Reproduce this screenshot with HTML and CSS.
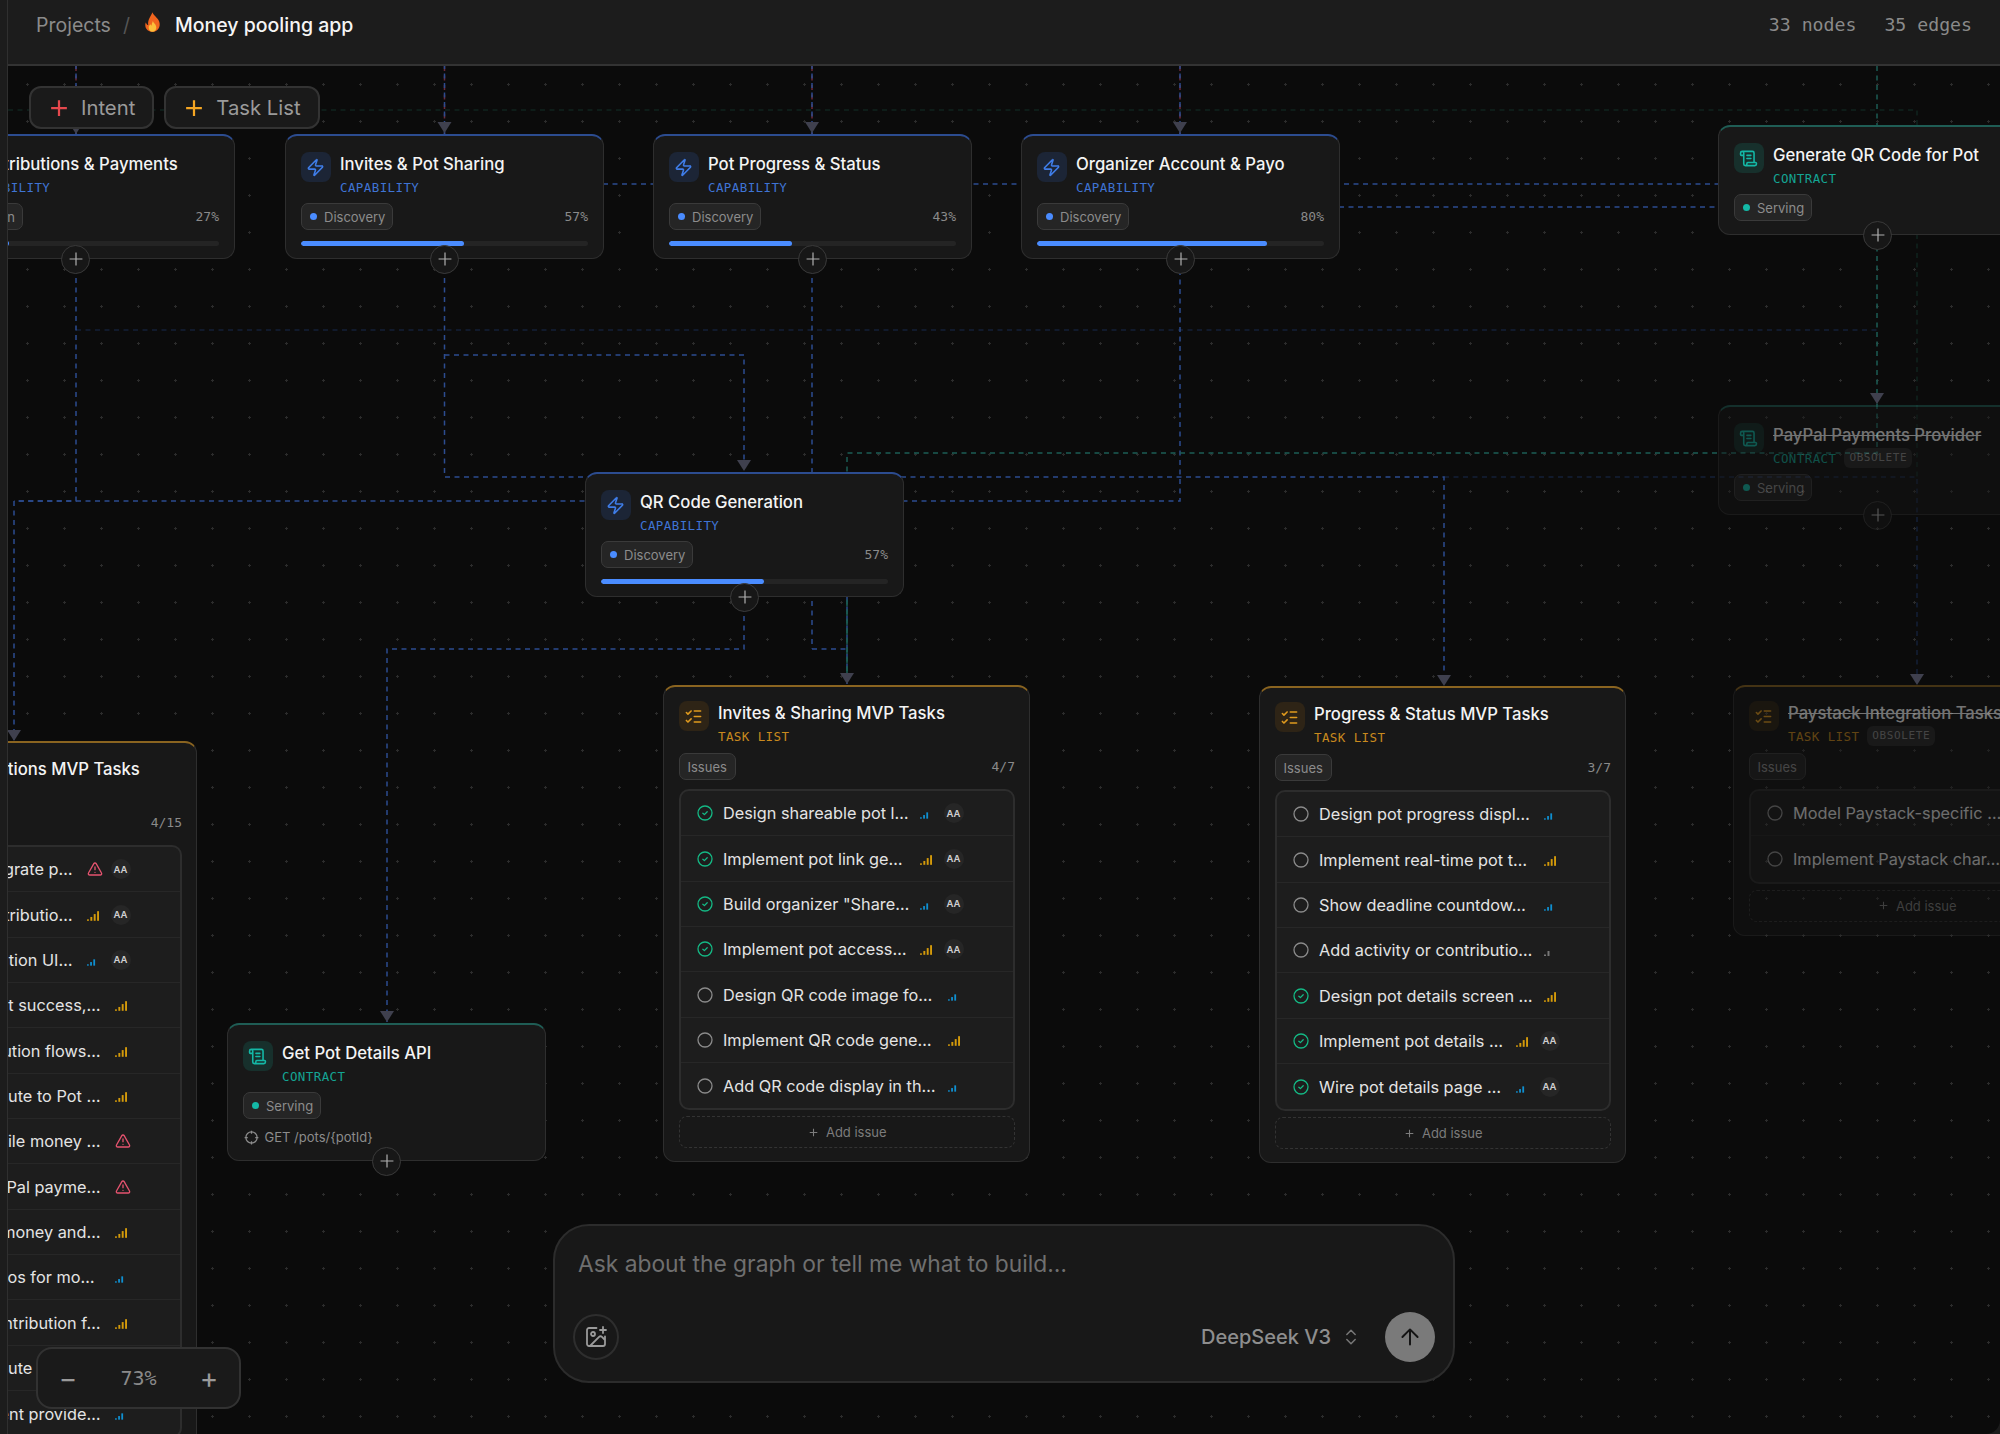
FILE: index.html
```html
<!DOCTYPE html>
<html lang="en">
<head>
<meta charset="utf-8">
<title>Money pooling app</title>
<link rel="stylesheet" href="styles.css">
</head>
<body>
<svg class="sprite" aria-hidden="true">
  <symbol id="i-zap" viewBox="0 0 24 24"><path d="M4 14a1 1 0 0 1-.78-1.63l9.9-10.2a.5.5 0 0 1 .86.46l-1.92 6.02A1 1 0 0 0 13 10h7a1 1 0 0 1 .78 1.63l-9.9 10.2a.5.5 0 0 1-.86-.46l1.92-6.02A1 1 0 0 0 11 14z"/></symbol>
  <symbol id="i-scroll" viewBox="0 0 24 24"><path d="M15 12h-5M15 8h-5M19 17V5a2 2 0 0 0-2-2H4M8 21h12a2 2 0 0 0 2-2v-1a1 1 0 0 0-1-1H11a1 1 0 0 0-1 1v1a2 2 0 1 1-4 0V5a2 2 0 1 0-4 0v2a1 1 0 0 0 1 1h3"/></symbol>
  <symbol id="i-list" viewBox="0 0 24 24"><path d="M13 5h8M13 12h8M13 19h8M3 17l2 2 4-4M3 7l2 2 4-4"/></symbol>
  <symbol id="i-plus" viewBox="0 0 24 24"><path d="M5 12h14M12 5v14"/></symbol>
  <symbol id="i-plus-tight" viewBox="4 4 16 16"><path d="M5 12h14M12 5v14"/></symbol>
  <symbol id="i-open" viewBox="0 0 16 16"><circle cx="8" cy="8" r="7"/></symbol>
  <symbol id="i-done" viewBox="0 0 16 16"><circle cx="8" cy="8" r="7"/><path d="M5.8 8.3l1.6 1.3 2.8-2.8"/></symbol>
  <symbol id="i-alert" viewBox="0 0 24 24"><path d="M21.73 18l-8-14a2 2 0 0 0-3.48 0l-8 14A2 2 0 0 0 4 21h16a2 2 0 0 0 1.73-3M12 9v4M12 17h.01"/></symbol>
  <symbol id="i-locate" viewBox="0 0 24 24"><circle cx="12" cy="12" r="9"/><path d="M1 12h5M18 12h5M12 1v5M12 18v5"/></symbol>
  <symbol id="i-sig3" viewBox="0 0 10 7"><rect x="0" y="5.5" width="2" height="1.5"/><rect x="3.5" y="3" width="2" height="4"/><rect x="7" y="0" width="2" height="7"/></symbol>
  <symbol id="i-sig4" viewBox="0 0 13 10"><rect x="0" y="8.5" width="2" height="1.5"/><rect x="3.5" y="6" width="2" height="4"/><rect x="7" y="3" width="2" height="7"/><rect x="10.5" y="0" width="2" height="10"/></symbol>
  <symbol id="i-sig2" viewBox="0 0 6 5"><rect x="0" y="3.5" width="2" height="1.5"/><rect x="3.5" y="0" width="2" height="5"/></symbol>
</svg>

<div class="app">
  <aside class="rail"></aside>
  <main class="main">
    <header class="topbar">
      <nav class="crumbs">
        <span class="crumb">Projects</span>
        <span class="crumb-sep">/</span>
        <svg class="flame" viewBox="0 0 20 24"><path class="flame-o" d="M10 0c1 4 6 6 8 11 2 6-2 12-8 12S0 18 2 12c1 2 2 3 3 3C4 9 8 5 10 0z"/><path class="flame-y" d="M10.500 10c.5 3 4 4 4 8 0 3-2 5-4.500 5s-4.500-2-4.500-5c0-2 1-3 2-4 .5 1 1 1.500 1.500 1.500C9 13 10 12 10.500 10z"/></svg>
        <span class="crumb-current">Money pooling app</span>
      </nav>
      <div class="stats"><span>33 nodes</span><span>35 edges</span></div>
    </header>

    <section class="canvas">
      <div class="graph">
        <svg class="edges" width="2100" height="1500" viewBox="0 0 2100 1500" fill="none">
          <g class="e-faint-teal"><path d="M8 110H1917V477"/></g>
          <g class="e-faint-blue"><path d="M76 330H1877M1444 477H1917V684"/></g>
          <g class="e-red"><path d="M76 66V134M444.500 66V134M812 66V134M1180 66V134"/></g>
          <g class="e-blue e-top"><path d="M76 66V134M444.500 66V134M812 66V134M1180 66V134"/></g>
          <g class="e-blue">
            <path d="M76 259V501H14V740"/>
            <path d="M76 501H1180V259"/>
            <path d="M444.500 259V477H1444V684"/>
            <path d="M444.500 355H744V471"/>
            <path d="M812 259V649"/>
            <path d="M744 597V649H387V1022"/>
            <path d="M812 649H847"/>
            <path d="M603 184H1718"/>
            <path d="M1339 207H1718"/>
            <path d="M847 597V684"/>
          </g>
          <g class="e-blue e-shift"><path d="M76 501H14"/></g>
          <g class="e-teal">
            <path d="M1877 66V404"/>
            <path d="M1877 404V453H847V684"/>
          </g>
          <g class="e-teal e-shift"><path d="M847 597V684"/></g>
          <g class="arrows">
            <path d="M69 123h14l-7 11z"/><path d="M437.500 122h14l-7 11z"/><path d="M805 122h14l-7 11z"/><path d="M1173 122h14l-7 11z"/>
            <path d="M737 460h14l-7 11z"/><path d="M840 673h14l-7 11z"/><path d="M1437 675h14l-7 11z"/><path d="M1910 674h14l-7 11z"/>
            <path d="M1870 393h14l-7 11z"/><path d="M380 1011h14l-7 11z"/><path d="M7 730h14l-7 11z"/>
          </g>
        </svg>

        <!-- capability nodes -->
        <article class="node cap n-contrib">
          <div class="node-head">
            <span class="node-icon"><svg class="ico"><use href="#i-zap"/></svg></span>
            <div class="node-names"><h3 class="node-title">Contributions &amp; Payments</h3><p class="node-kind">CAPABILITY</p></div>
          </div>
          <div class="node-meta"><span class="pill"><i class="dot"></i>Validation</span><span class="pct">27%</span></div>
          <div class="bar"><div class="bar-fill" style="width:27%"></div></div>
          <button class="add"><svg class="add-ico"><use href="#i-plus"/></svg></button>
        </article>

        <article class="node cap n-invites">
          <div class="node-head">
            <span class="node-icon"><svg class="ico"><use href="#i-zap"/></svg></span>
            <div class="node-names"><h3 class="node-title">Invites &amp; Pot Sharing</h3><p class="node-kind">CAPABILITY</p></div>
          </div>
          <div class="node-meta"><span class="pill"><i class="dot"></i>Discovery</span><span class="pct">57%</span></div>
          <div class="bar"><div class="bar-fill" style="width:57%"></div></div>
          <button class="add"><svg class="add-ico"><use href="#i-plus"/></svg></button>
        </article>

        <article class="node cap n-progress">
          <div class="node-head">
            <span class="node-icon"><svg class="ico"><use href="#i-zap"/></svg></span>
            <div class="node-names"><h3 class="node-title">Pot Progress &amp; Status</h3><p class="node-kind">CAPABILITY</p></div>
          </div>
          <div class="node-meta"><span class="pill"><i class="dot"></i>Discovery</span><span class="pct">43%</span></div>
          <div class="bar"><div class="bar-fill" style="width:43%"></div></div>
          <button class="add"><svg class="add-ico"><use href="#i-plus"/></svg></button>
        </article>

        <article class="node cap n-organizer">
          <div class="node-head">
            <span class="node-icon"><svg class="ico"><use href="#i-zap"/></svg></span>
            <div class="node-names"><h3 class="node-title">Organizer Account &amp; Payo</h3><p class="node-kind">CAPABILITY</p></div>
          </div>
          <div class="node-meta"><span class="pill"><i class="dot"></i>Discovery</span><span class="pct">80%</span></div>
          <div class="bar"><div class="bar-fill" style="width:80%"></div></div>
          <button class="add"><svg class="add-ico"><use href="#i-plus"/></svg></button>
        </article>

        <article class="node cap n-qr">
          <div class="node-head">
            <span class="node-icon"><svg class="ico"><use href="#i-zap"/></svg></span>
            <div class="node-names"><h3 class="node-title">QR Code Generation</h3><p class="node-kind">CAPABILITY</p></div>
          </div>
          <div class="node-meta"><span class="pill"><i class="dot"></i>Discovery</span><span class="pct">57%</span></div>
          <div class="bar"><div class="bar-fill" style="width:57%"></div></div>
          <button class="add"><svg class="add-ico"><use href="#i-plus"/></svg></button>
        </article>

        <!-- contract nodes -->
        <article class="node con n-genqr">
          <div class="node-head">
            <span class="node-icon"><svg class="ico"><use href="#i-scroll"/></svg></span>
            <div class="node-names"><h3 class="node-title">Generate QR Code for Pot</h3><p class="node-kind">CONTRACT</p></div>
          </div>
          <div class="node-meta"><span class="pill"><i class="dot"></i>Serving</span></div>
          <button class="add"><svg class="add-ico"><use href="#i-plus"/></svg></button>
        </article>

        <article class="node con obsolete n-paypal">
          <div class="node-head">
            <span class="node-icon"><svg class="ico"><use href="#i-scroll"/></svg></span>
            <div class="node-names"><h3 class="node-title">PayPal Payments Provider</h3><p class="node-kind">CONTRACT<span class="tag">OBSOLETE</span></p></div>
          </div>
          <div class="node-meta"><span class="pill"><i class="dot"></i>Serving</span></div>
          <button class="add"><svg class="add-ico"><use href="#i-plus"/></svg></button>
        </article>

        <article class="node con n-getpot">
          <div class="node-head">
            <span class="node-icon"><svg class="ico"><use href="#i-scroll"/></svg></span>
            <div class="node-names"><h3 class="node-title">Get Pot Details API</h3><p class="node-kind">CONTRACT</p></div>
          </div>
          <div class="node-meta"><span class="pill"><i class="dot"></i>Serving</span></div>
          <div class="endpoint"><svg class="endpoint-ico"><use href="#i-locate"/></svg>GET /pots/{potId}</div>
          <button class="add"><svg class="add-ico"><use href="#i-plus"/></svg></button>
        </article>

        <!-- task list nodes -->
        <article class="node task n-tcontrib">
          <div class="node-head">
            <span class="node-icon"><svg class="ico"><use href="#i-list"/></svg></span>
            <div class="node-names"><h3 class="node-title">Group Contributions MVP Tasks</h3><p class="node-kind">TASK LIST</p></div>
          </div>
          <div class="node-meta"><span class="pill">Issues</span><span class="pct">4/15</span></div>
          <ul class="issues">
            <li class="issue"><svg class="st done"><use href="#i-done"/></svg><span class="issue-text tail">Integrate p…</span><span class="sig"><svg class="alert"><use href="#i-alert"/></svg></span><span class="ava">AA</span></li>
            <li class="issue"><svg class="st done"><use href="#i-done"/></svg><span class="issue-text tail">Attributio…</span><span class="sig"><svg class="s4"><use href="#i-sig4"/></svg></span><span class="ava">AA</span></li>
            <li class="issue"><svg class="st done"><use href="#i-done"/></svg><span class="issue-text tail">Contribution UI…</span><span class="sig"><svg class="s3"><use href="#i-sig3"/></svg></span><span class="ava">AA</span></li>
            <li class="issue"><svg class="st done"><use href="#i-done"/></svg><span class="issue-text tail">Handle payment success,…</span><span class="sig"><svg class="s4"><use href="#i-sig4"/></svg></span></li>
            <li class="issue"><svg class="st"><use href="#i-open"/></svg><span class="issue-text tail">Test contribution flows…</span><span class="sig"><svg class="s4"><use href="#i-sig4"/></svg></span></li>
            <li class="issue"><svg class="st"><use href="#i-open"/></svg><span class="issue-text tail">Wire contribute to Pot …</span><span class="sig"><svg class="s4"><use href="#i-sig4"/></svg></span></li>
            <li class="issue"><svg class="st"><use href="#i-open"/></svg><span class="issue-text tail">Integrate mobile money …</span><span class="sig"><svg class="alert"><use href="#i-alert"/></svg></span></li>
            <li class="issue"><svg class="st"><use href="#i-open"/></svg><span class="issue-text tail">Integrate PayPal payme…</span><span class="sig"><svg class="alert"><use href="#i-alert"/></svg></span></li>
            <li class="issue"><svg class="st"><use href="#i-open"/></svg><span class="issue-text tail">Add mobile money and…</span><span class="sig"><svg class="s4"><use href="#i-sig4"/></svg></span></li>
            <li class="issue"><svg class="st"><use href="#i-open"/></svg><span class="issue-text tail tail-far">Test scenarios for mo…</span><span class="sig"><svg class="s3"><use href="#i-sig3"/></svg></span></li>
            <li class="issue"><svg class="st"><use href="#i-open"/></svg><span class="issue-text tail">Add contribution f…</span><span class="sig"><svg class="s4"><use href="#i-sig4"/></svg></span></li>
            <li class="issue"><svg class="st"><use href="#i-open"/></svg><span class="issue-text tail">Wire contribute to Pot …</span><span class="sig"><svg class="s4"><use href="#i-sig4"/></svg></span></li>
            <li class="issue"><svg class="st"><use href="#i-open"/></svg><span class="issue-text tail">Add payment provide…</span><span class="sig"><svg class="s3"><use href="#i-sig3"/></svg></span></li>
          </ul>
        </article>

        <article class="node task n-tinvites">
          <div class="node-head">
            <span class="node-icon"><svg class="ico"><use href="#i-list"/></svg></span>
            <div class="node-names"><h3 class="node-title">Invites &amp; Sharing MVP Tasks</h3><p class="node-kind">TASK LIST</p></div>
          </div>
          <div class="node-meta"><span class="pill">Issues</span><span class="pct">4/7</span></div>
          <ul class="issues">
            <li class="issue"><svg class="st done"><use href="#i-done"/></svg><span class="issue-text">Design shareable pot l…</span><span class="sig"><svg class="s3"><use href="#i-sig3"/></svg></span><span class="ava">AA</span></li>
            <li class="issue"><svg class="st done"><use href="#i-done"/></svg><span class="issue-text">Implement pot link ge…</span><span class="sig"><svg class="s4"><use href="#i-sig4"/></svg></span><span class="ava">AA</span></li>
            <li class="issue"><svg class="st done"><use href="#i-done"/></svg><span class="issue-text">Build organizer "Share…</span><span class="sig"><svg class="s3"><use href="#i-sig3"/></svg></span><span class="ava">AA</span></li>
            <li class="issue"><svg class="st done"><use href="#i-done"/></svg><span class="issue-text">Implement pot access…</span><span class="sig"><svg class="s4"><use href="#i-sig4"/></svg></span><span class="ava">AA</span></li>
            <li class="issue"><svg class="st"><use href="#i-open"/></svg><span class="issue-text">Design QR code image fo…</span><span class="sig"><svg class="s3"><use href="#i-sig3"/></svg></span></li>
            <li class="issue"><svg class="st"><use href="#i-open"/></svg><span class="issue-text">Implement QR code gene…</span><span class="sig"><svg class="s4"><use href="#i-sig4"/></svg></span></li>
            <li class="issue"><svg class="st"><use href="#i-open"/></svg><span class="issue-text">Add QR code display in th…</span><span class="sig"><svg class="s3"><use href="#i-sig3"/></svg></span></li>
          </ul>
          <div class="add-issue"><svg class="add-issue-ico"><use href="#i-plus"/></svg>Add issue</div>
        </article>

        <article class="node task n-tprogress">
          <div class="node-head">
            <span class="node-icon"><svg class="ico"><use href="#i-list"/></svg></span>
            <div class="node-names"><h3 class="node-title">Progress &amp; Status MVP Tasks</h3><p class="node-kind">TASK LIST</p></div>
          </div>
          <div class="node-meta"><span class="pill">Issues</span><span class="pct">3/7</span></div>
          <ul class="issues">
            <li class="issue"><svg class="st"><use href="#i-open"/></svg><span class="issue-text">Design pot progress displ…</span><span class="sig"><svg class="s3"><use href="#i-sig3"/></svg></span></li>
            <li class="issue"><svg class="st"><use href="#i-open"/></svg><span class="issue-text">Implement real-time pot t…</span><span class="sig"><svg class="s4"><use href="#i-sig4"/></svg></span></li>
            <li class="issue"><svg class="st"><use href="#i-open"/></svg><span class="issue-text">Show deadline countdow…</span><span class="sig"><svg class="s3"><use href="#i-sig3"/></svg></span></li>
            <li class="issue"><svg class="st"><use href="#i-open"/></svg><span class="issue-text">Add activity or contributio…</span><span class="sig"><svg class="s2"><use href="#i-sig2"/></svg></span></li>
            <li class="issue"><svg class="st done"><use href="#i-done"/></svg><span class="issue-text">Design pot details screen …</span><span class="sig"><svg class="s4"><use href="#i-sig4"/></svg></span></li>
            <li class="issue"><svg class="st done"><use href="#i-done"/></svg><span class="issue-text">Implement pot details …</span><span class="sig"><svg class="s4"><use href="#i-sig4"/></svg></span><span class="ava">AA</span></li>
            <li class="issue"><svg class="st done"><use href="#i-done"/></svg><span class="issue-text">Wire pot details page …</span><span class="sig"><svg class="s3"><use href="#i-sig3"/></svg></span><span class="ava">AA</span></li>
          </ul>
          <div class="add-issue"><svg class="add-issue-ico"><use href="#i-plus"/></svg>Add issue</div>
        </article>

        <article class="node task obsolete n-tpaystack">
          <div class="node-head">
            <span class="node-icon"><svg class="ico"><use href="#i-list"/></svg></span>
            <div class="node-names"><h3 class="node-title">Paystack Integration Tasks</h3><p class="node-kind">TASK LIST<span class="tag">OBSOLETE</span></p></div>
          </div>
          <div class="node-meta"><span class="pill">Issues</span><span class="pct">0/2</span></div>
          <ul class="issues">
            <li class="issue"><svg class="st"><use href="#i-open"/></svg><span class="issue-text">Model Paystack-specific …</span><span class="sig"><svg class="s4"><use href="#i-sig4"/></svg></span></li>
            <li class="issue"><svg class="st"><use href="#i-open"/></svg><span class="issue-text">Implement Paystack char…</span><span class="sig"><svg class="s4"><use href="#i-sig4"/></svg></span></li>
          </ul>
          <div class="add-issue"><svg class="add-issue-ico"><use href="#i-plus"/></svg>Add issue</div>
        </article>
      </div>

      <div class="toolbar">
        <button class="tool"><svg class="tool-ico red"><use href="#i-plus-tight"/></svg>Intent</button>
        <button class="tool"><svg class="tool-ico amber"><use href="#i-plus-tight"/></svg>Task List</button>
      </div>

      <div class="zoombox">
        <span class="zoom-btn">−</span>
        <span class="zoom-val">73%</span>
        <span class="zoom-btn">+</span>
      </div>

      <form class="chat">
        <div class="chat-input">Ask about the graph or tell me what to build…</div>
        <div class="chat-foot">
          <button class="attach" type="button"><svg class="attach-ico" viewBox="0 0 24 24"><path d="M16 5h6M19 2v6M21 11.500V19a2 2 0 0 1-2 2H5a2 2 0 0 1-2-2V5a2 2 0 0 1 2-2h7.500M21 15l-3.086-3.086a2 2 0 0 0-2.828 0L6 21"/><circle cx="9" cy="9" r="2"/></svg></button>
          <span class="model">DeepSeek V3<svg class="model-ico" viewBox="0 0 24 24"><path d="M7 15l5 5 5-5M7 9l5-5 5 5"/></svg></span>
          <button class="send" type="button"><svg class="send-ico" viewBox="0 0 24 24"><path d="M5 12l7-7 7 7M12 19V5"/></svg></button>
        </div>
      </form>
    </section>
  </main>
</div>
</body>
</html>
```

FILE: styles.css
```css
* { box-sizing: border-box; margin: 0; padding: 0; }
html, body { width: 2000px; height: 1434px; overflow: hidden; background: #1b1b1b; }
body { font-family: Inter, "Noto Sans", sans-serif; color: #f2f2f2; }
button { font: inherit; color: inherit; }
ul { list-style: none; }
.sprite { position: absolute; width: 0; height: 0; }

.app { display: flex; width: 2000px; height: 1434px; }
.rail { width: 8px; flex: none; background: #1c1c1c; border-right: 1px solid #2f2f2f; }
.main { flex: 1; min-width: 0; display: flex; flex-direction: column; }

.topbar { height: 66px; flex: none; display: flex; align-items: flex-start; justify-content: space-between; padding: 12px 28px 0 28px; background: #1c1c1c; border-bottom: 2px solid #333; position: relative; z-index: 5; }
.crumbs { display: flex; align-items: center; height: 25px; font-size: 19.500px; }
.crumb { color: #8b8b8b; }
.crumb-sep { color: #555; margin-left: 12px; margin-right: 14px; }
.flame { width: 17px; height: 21px; margin-top: -4px; margin-right: 14px; }
.flame-o { fill: #f0641e; }
.flame-y { fill: #fbbf3a; }
.crumb-current { font-weight: 500; color: #f5f5f5; }
.stats { display: flex; gap: 28px; font-family: "DejaVu Sans Mono", monospace; font-size: 18.200px; color: #8a8a8a; height: 25px; line-height: 25px; }

.canvas { position: relative; flex: 1; overflow: hidden; background-color: #0b0b0b; background-image: radial-gradient(circle at center, #2c2c2c 1px, transparent 1.4px); background-size: 37px 37px; background-position: 1px 0; border-bottom-right-radius: 14px; }
.graph { position: absolute; left: -8px; top: -66px; width: 2100px; height: 1500px; }
.edges { position: absolute; left: 0; top: 0; }
.edges path { stroke-width: 1.5; stroke-dasharray: 5 4.5; }
.e-blue path { stroke: #2c4c90; }
.e-teal path { stroke: #1d5d55; }
.e-red path { stroke: #6d2a3a; }
.e-faint-blue path { stroke: #152038; }
.e-faint-teal path { stroke: #10241f; }
.e-shift path { stroke-dashoffset: 5; }
.e-top path { stroke-dashoffset: 2; }
.edges .arrows path { fill: #3f404e; stroke: none; }

.node { position: absolute; width: 319px; background: #181818; border: 1.5px solid #2e2e2e; border-radius: 12px; padding: 16px 15px 13px 14.500px; }
.cap { border-top: 2px solid #2c4c90; }
.con { border-top: 2px solid #1f5d55; }
.task { border-top: 2px solid #8a6420; width: 367px; padding-top: 14px; padding-right: 14px; }
.obsolete { opacity: .45; background: #141414; }
.n-contrib { left: -84px; top: 134px; }
.n-invites { left: 285px; top: 134px; }
.n-progress { left: 653px; top: 134px; }
.n-organizer { left: 1021px; top: 134px; }
.n-qr { left: 585px; top: 472px; }
.n-genqr { left: 1718px; top: 125px; }
.n-paypal { left: 1718px; top: 405px; }
.n-getpot { left: 227px; top: 1023px; }
.n-tcontrib { left: -170px; top: 741px; }
.n-tinvites { left: 663px; top: 685px; }
.n-tprogress { left: 1259px; top: 686px; }
.n-tpaystack { left: 1733px; top: 685px; }

.node-head { display: flex; gap: 9.500px; align-items: flex-start; }
.node-icon { width: 30px; height: 30px; flex: none; border-radius: 8px; display: flex; align-items: center; justify-content: center; }
.ico { width: 19px; height: 19px; fill: none; stroke: currentColor; stroke-width: 2; stroke-linecap: round; stroke-linejoin: round; }
.cap .node-icon { background: #1c2536; color: #3f7de8; }
.con .node-icon { background: #17302c; color: #14b8a6; }
.task .node-icon { background: #2e2416; color: #e09a1e; }
.node-names { padding-top: 2px; min-width: 0; }
.node-title { font-size: 16.700px; font-weight: 500; line-height: 20px; white-space: nowrap; color: #f4f4f4; }
.obsolete .node-title { text-decoration: line-through; }
.node-kind { display: flex; align-items: center; margin-top: 5px; height: 16px; font-family: "DejaVu Sans Mono", monospace; font-size: 12.500px; letter-spacing: .4px; white-space: nowrap; }
.cap .node-kind { color: #3f74d4; }
.con .node-kind { color: #14a594; }
.task .node-kind { color: #c98a1e; }
.tag { margin-left: 8px; padding: 0 5px; height: 20px; line-height: 20px; border-radius: 6px; background: #2a2a2a; color: #8a8a8a; font-size: 11px; letter-spacing: .6px; }

.node-meta { display: flex; align-items: center; justify-content: space-between; margin-top: 8px; }
.task .node-meta { margin-top: 9px; }
.pill { display: inline-flex; align-items: center; gap: 6px; height: 27px; padding: 0 7px 0 8px; border: 1.5px solid #3a3a3a; border-radius: 7px; background: #252525; font-size: 13px; color: #8c8c8c; }
.task .pill { padding: 0 8px; }
.dot { width: 7.500px; height: 7.500px; border-radius: 50%; margin-right: 1px; }
.cap .dot { background: #4a8cff; }
.con .dot { background: #14b8a6; }
.pct { font-family: "DejaVu Sans Mono", monospace; font-size: 13px; color: #8a8a8a; }

.bar { height: 5px; margin-top: 11px; border-radius: 3px; background: #242424; overflow: hidden; }
.bar-fill { height: 5px; border-radius: 3px; background: #4a8cff; }
.cap { padding-bottom: 12px; }

.add { position: absolute; left: 50%; bottom: -15.500px; width: 29px; height: 29px; margin-left: -14.500px; border-radius: 50%; background: #171717; border: 1.5px solid #3a3a3a; display: flex; align-items: center; justify-content: center; z-index: 2; }
.add-ico { width: 22px; height: 22px; fill: none; stroke: #b0b0b0; stroke-width: 1.300; }

.endpoint { display: flex; align-items: center; gap: 6px; margin-top: 8px; height: 20px; font-size: 13px; color: #8c8c8c; }
.endpoint-ico { width: 15px; height: 15px; margin-left: 1px; fill: none; stroke: #8c8c8c; stroke-width: 2; }

.issues { margin-top: 9px; border: 2px solid #2d2d2d; border-radius: 10px; background: #1d1d1d; overflow: hidden; }
.issue { display: flex; align-items: center; height: 45.350px; padding: 0 49.500px 0 16px; border-bottom: 1px solid #272727; }
.issue:last-child { border-bottom: 0; }
.st { width: 16px; height: 16px; flex: none; margin-right: 10.500px; fill: none; stroke: #8a8a8a; stroke-width: 1.300; }
.st.done { stroke: #14b884; stroke-linecap: round; stroke-linejoin: round; }
.issue-text { flex: 1; min-width: 0; white-space: nowrap; font-size: 16.300px; color: #e4e4e4; }
.tail { display: flex; justify-content: flex-end; padding-right: 14px; }
.tail-far { padding-right: 20px; }
.sig { width: 16px; height: 12px; flex: none; display: flex; align-items: flex-end; }
.s3 { width: 9px; height: 7px; fill: #0f8fd0; }
.s4 { width: 12.500px; height: 10px; fill: #d49a0a; }
.s2 { width: 6px; height: 5px; fill: #777; }
.alert { width: 16px; height: 16px; margin-top: -3px; margin-bottom: -2px; flex: none; fill: none; stroke: #e5536f; stroke-width: 2; stroke-linecap: round; stroke-linejoin: round; }
.ava { width: 20px; height: 20px; flex: none; margin-left: 8px; border-radius: 50%; background: #262626; color: #d0d0d0; font-size: 9.500px; font-weight: 600; display: flex; align-items: center; justify-content: center; }

.add-issue { display: flex; align-items: center; justify-content: center; gap: 6px; height: 32px; margin-top: 6px; border: 1.5px dashed #333; border-radius: 8px; font-size: 13px; color: #7c7c7c; }
.add-issue-ico { width: 13px; height: 13px; fill: none; stroke: #7c7c7c; stroke-width: 2; }

.toolbar { position: absolute; left: 21px; top: 20px; display: flex; gap: 10px; z-index: 3; }
.tool { display: flex; align-items: center; gap: 13px; height: 43px; padding: 0 17px 0 19px; background: #1a1a1a; border: 2px solid #333; border-radius: 12px; font-size: 20.300px; color: #9a9a9a; }
.tool-ico { width: 18px; height: 18px; fill: none; stroke-width: 2; }
.red { stroke: #e5484d; }
.amber { stroke: #f5a623; }

.zoombox { position: absolute; left: 28px; top: 1281px; width: 205px; height: 62px; display: flex; align-items: center; justify-content: space-between; padding: 0 18px; background: #1a1a1a; border: 2px solid #323232; border-radius: 16px; z-index: 4; color: #9a9a9a; }
.zoom-btn { font-size: 28px; width: 24px; text-align: center; }
.zoom-val { font-family: "DejaVu Sans Mono", monospace; font-size: 20px; color: #8a8a8a; }

.chat { position: absolute; left: 545px; top: 1158px; width: 902px; height: 159px; display: flex; flex-direction: column; padding: 0 18px 19px; background: #181818; border: 2px solid #2c2c2c; border-radius: 36px; z-index: 4; }
.chat-input { flex: 1; padding: 25px 5px 0; font-size: 22.800px; line-height: 26px; color: #6f6f6f; }
.chat-foot { display: flex; align-items: center; height: 50px; }
.attach { width: 46px; height: 46px; border-radius: 50%; background: #181818; border: 2px solid #2e2e2e; display: flex; align-items: center; justify-content: center; }
.attach-ico { width: 24px; height: 24px; fill: none; stroke: #9a9a9a; stroke-width: 1.800; stroke-linecap: round; stroke-linejoin: round; }
.model { margin-left: auto; display: flex; align-items: center; gap: 10px; font-size: 20px; font-weight: 500; color: #8e8e8e; margin-right: 24px; }
.model-ico { width: 20px; height: 20px; fill: none; stroke: #777; stroke-width: 1.800; stroke-linecap: round; stroke-linejoin: round; }
.send { width: 50px; height: 50px; border-radius: 50%; background: #7a7a7a; border: 0; display: flex; align-items: center; justify-content: center; }
.send-ico { width: 26px; height: 26px; fill: none; stroke: #141414; stroke-width: 1.800; stroke-linecap: round; stroke-linejoin: round; }
```
